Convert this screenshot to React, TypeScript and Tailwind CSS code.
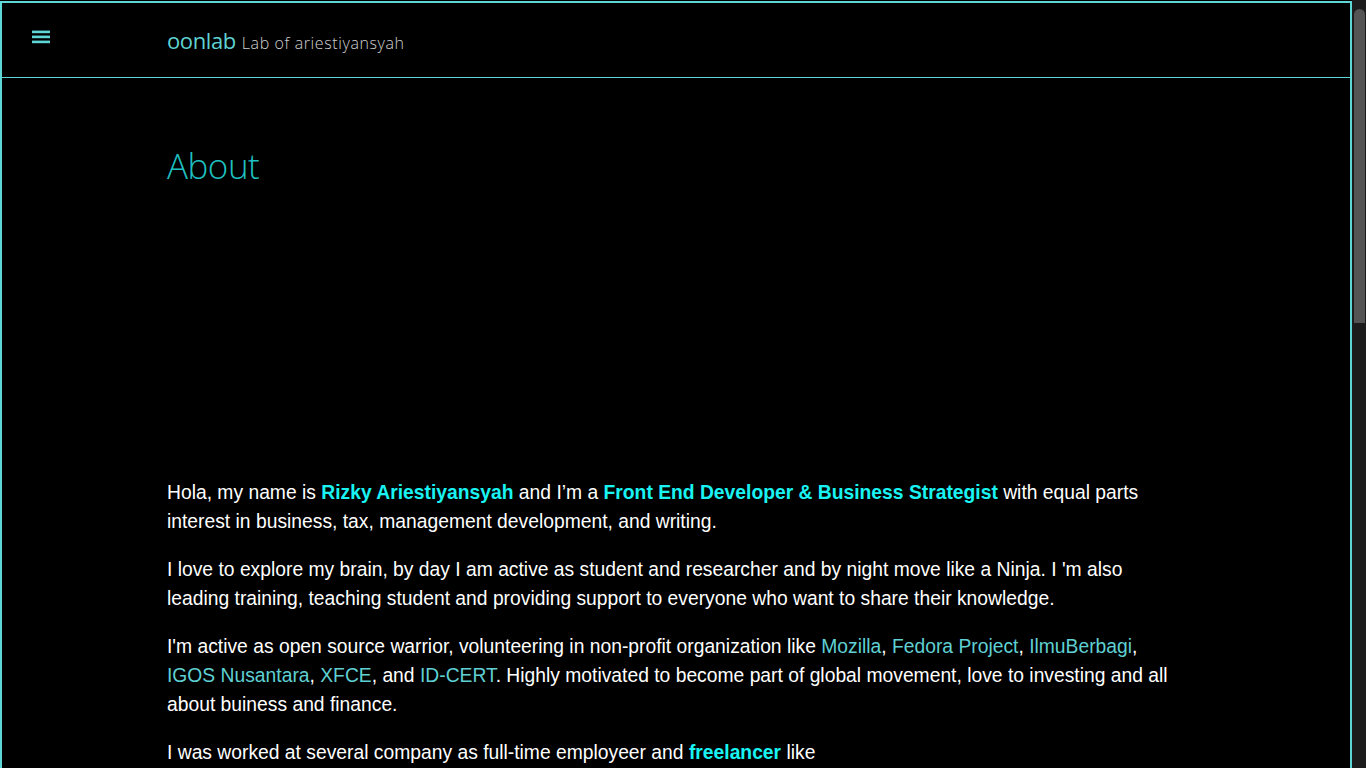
import React from "react";

const Bold = ({ children }: { children: React.ReactNode }) => (
  <a className="font-bold text-[#19f3f3]">{children}</a>
);
const Link = ({ children }: { children: React.ReactNode }) => (
  <a className="text-[#5fd0d3]">{children}</a>
);

export default function App() {
  return (
    <div className="h-screen overflow-hidden bg-black flex">
      <div className="w-[1352px] shrink-0 pt-px bg-black">
        <div className="border-2 border-[#5ed6d6] min-h-[1880px] bg-black">
          <header className="h-[75px] border-b border-[#5ed6d6] flex items-start">
            <div className="w-[165px] pl-[30px] pt-[27px]">
              <svg width="18" height="14" viewBox="0 0 18 14" className="block">
                <rect x="0" y="0.6" width="18" height="2.6" fill="#5ed6d6" />
                <rect x="0" y="5.6" width="18" height="2.6" fill="#5ed6d6" />
                <rect x="0" y="10.6" width="18" height="2.6" fill="#5ed6d6" />
              </svg>
            </div>
            <div className="pt-[26px] flex items-baseline gap-[6px]" style={{ fontFamily: '"Open Sans", sans-serif' }}>
              <span className="text-[22px] leading-none text-[#5fd3d3] tracking-[-0.4px]">oonlab</span>
              <span className="text-[16px] leading-none font-light text-[#d0d0d0] tracking-[0.6px]">Lab of ariestiyansyah</span>
            </div>
          </header>
          <main className="px-[165px]">
            <h1
              className="pt-[64px] text-[35px] leading-[48px] font-light text-[#1fc0c2] tracking-[-0.5px]"
              style={{ fontFamily: '"Open Sans", sans-serif' }}
            >
              About
            </h1>
            <div className="h-[288px]" />
            <div
              className="text-[19.3px] leading-[29px] text-white flex flex-col gap-[19px]"
              style={{ fontFamily: '"Liberation Sans", Arial, sans-serif' }}
            >
              <p>
                Hola, my name is <Bold>Rizky Ariestiyansyah</Bold> and I’m a{" "}
                <Bold>Front End Developer &amp; Business Strategist</Bold> with equal parts interest in business, tax,
                management development, and writing.
              </p>
              <p>
                I love to explore my brain, by day I am active as student and researcher and by night move like a
                Ninja. I 'm also leading training, teaching student and providing support to everyone who want to share
                their knowledge.
              </p>
              <p>
                I'm active as open source warrior, volunteering in non-profit organization like <Link>Mozilla</Link>,{" "}
                <Link>Fedora Project</Link>, <Link>IlmuBerbagi</Link>, <Link>IGOS Nusantara</Link>, <Link>XFCE</Link>,
                and <Link>ID-CERT</Link>. Highly motivated to become part of global movement, love to investing and all
                about buiness and finance.
              </p>
              <p>
                I was worked at several company as full-time employeer and <Bold>freelancer</Bold> like
              </p>
            </div>
          </main>
        </div>
      </div>
      <div className="flex-1 bg-[#1c1c1c] flex justify-center">
        <div className="mt-[9px] w-[11px] h-[314px] rounded-t-full rounded-b-[3px] bg-[#545454]" />
      </div>
    </div>
  );
}
